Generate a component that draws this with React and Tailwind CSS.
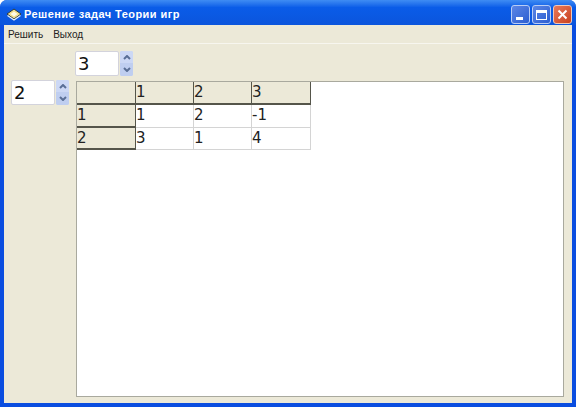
import React from 'react';

const font = { fontFamily: '"DejaVu Sans", sans-serif' };

const Spinner = ({ value }) => (
  <div className="flex items-center gap-px">
    <div className="w-[44px] h-[25px] bg-white border border-[#d3d3dc] rounded-[2px] pl-[2px] text-[18px] leading-[24px] text-[#111]">
      {value}
    </div>
    <div className="w-[13px] h-[25px] flex flex-col rounded-[2px] overflow-hidden bg-[#c6d3f2]">
      <div className="h-[12px] flex items-center justify-center bg-[#ccd8f5]">
        <svg width="8" height="5" viewBox="0 0 8 5"><path d="M1 4 L4 1 L7 4" fill="none" stroke="#5a6f96" strokeWidth="2" /></svg>
      </div>
      <div className="h-[13px] flex items-center justify-center bg-[#bfcef0]">
        <svg width="8" height="5" viewBox="0 0 8 5"><path d="M1 1 L4 4 L7 1" fill="none" stroke="#5a6f96" strokeWidth="2" /></svg>
      </div>
    </div>
  </div>
);

const HeadCell = ({ children }) => (
  <div className="bg-[#ece9d8] border-r border-b-2 border-[#55554a] pl-0 text-[15px] leading-[21px] text-[#222]">
    {children}
  </div>
);

const Cell = ({ children }) => (
  <div className="bg-white border-r border-b border-[#d4d4d4] pl-0 text-[15px] leading-[21px] text-[#222]">
    {children}
  </div>
);

const App = () => {
  const rows = [
    ['1', '1', '2', '-1'],
    ['2', '3', '1', '4'],
  ];

  return (
    <div className="w-[576px] h-[407px] overflow-hidden flex flex-col bg-[#0a4de0] rounded-t-[7px]" style={font}>
      {/* Title bar */}
      <div className="h-[25px] shrink-0 flex items-center bg-gradient-to-b from-[#3f8cf3] via-[#0a5ce8] via-30% to-[#0b55dc] pl-[6px] pr-[4px] pt-[4px]">
        <svg width="16" height="13" viewBox="0 0 16 13" className="shrink-0">
          <path d="M1 6 L8 1 L15 6 L8 11 Z" fill="#f0dc8c" stroke="#2c3a40" strokeWidth="1" />
          <path d="M1.5 7.5 L8 12 L14.5 7.5" fill="none" stroke="#e8eef5" strokeWidth="1.2" />
          <path d="M4.5 6 L8 3.5 L11.5 6 L8 8.5 Z" fill="#fffbe6" />
        </svg>
        <span className="ml-[2px] text-white font-bold text-[11px] tracking-[0.45px] whitespace-nowrap" style={{ fontFamily: '"Liberation Sans", sans-serif' }}>
          Решение задач Теории игр
        </span>
        <div className="ml-auto flex gap-[2px]">
          <div className="w-[19px] h-[19px] rounded-[3px] border border-[#b9cdf5] bg-gradient-to-br from-[#5c86e6] to-[#2c5ed0] flex items-end pl-[4px] pb-[3px]">
            <div className="w-[7px] h-[3px] bg-white" />
          </div>
          <div className="w-[19px] h-[19px] rounded-[3px] border border-[#b9cdf5] bg-gradient-to-br from-[#5c86e6] to-[#2c5ed0] flex items-center justify-center">
            <div className="w-[11px] h-[10px] border border-white border-t-[3px]" />
          </div>
          <div className="w-[19px] h-[19px] rounded-[3px] border border-[#f0c8b8] bg-gradient-to-br from-[#e8795a] to-[#c8401c] flex items-center justify-center">
            <svg width="11" height="11" viewBox="0 0 11 11"><path d="M1.5 1.5 L9.5 9.5 M9.5 1.5 L1.5 9.5" stroke="#fff" strokeWidth="2" /></svg>
          </div>
        </div>
      </div>

      {/* Window body */}
      <div className="flex-1 min-h-0 mx-[4px] mb-[4px] bg-[#ece9d8] flex flex-col">
        <div className="h-[18px] shrink-0 flex items-center gap-[10px] pl-[4px] text-[10px] text-[#222] border-b border-[#f7f6ef] box-content" style={{ fontFamily: '"Liberation Sans", sans-serif' }}>
          <span>Решить</span>
          <span>Выход</span>
        </div>

        <div className="flex-1 min-h-0 flex">
          <div className="w-[72px] shrink-0 pl-[7px] pt-[36px]">
            <Spinner value="2" />
          </div>
          <div className="flex-1 min-w-0 flex flex-col pr-[8px] pb-[6px]">
            <div className="h-[37px] shrink-0 pt-[7px] -ml-px">
              <Spinner value="3" />
            </div>
            <div className="flex-1 min-h-0 bg-white border border-[#a9a99e]">
              <div className="grid grid-cols-[59px_58px_58px_59px] grid-rows-[23px_23px_22px] w-fit">
                <HeadCell />
                <HeadCell>1</HeadCell>
                <HeadCell>2</HeadCell>
                <HeadCell>3</HeadCell>
                {rows.map((row) =>
                  row.map((value, i) =>
                    i === 0 ? <HeadCell key={i + row[0]}>{value}</HeadCell> : <Cell key={i + row[0]}>{value}</Cell>
                  )
                )}
              </div>
            </div>
          </div>
        </div>
      </div>
    </div>
  );
};

export default App;
